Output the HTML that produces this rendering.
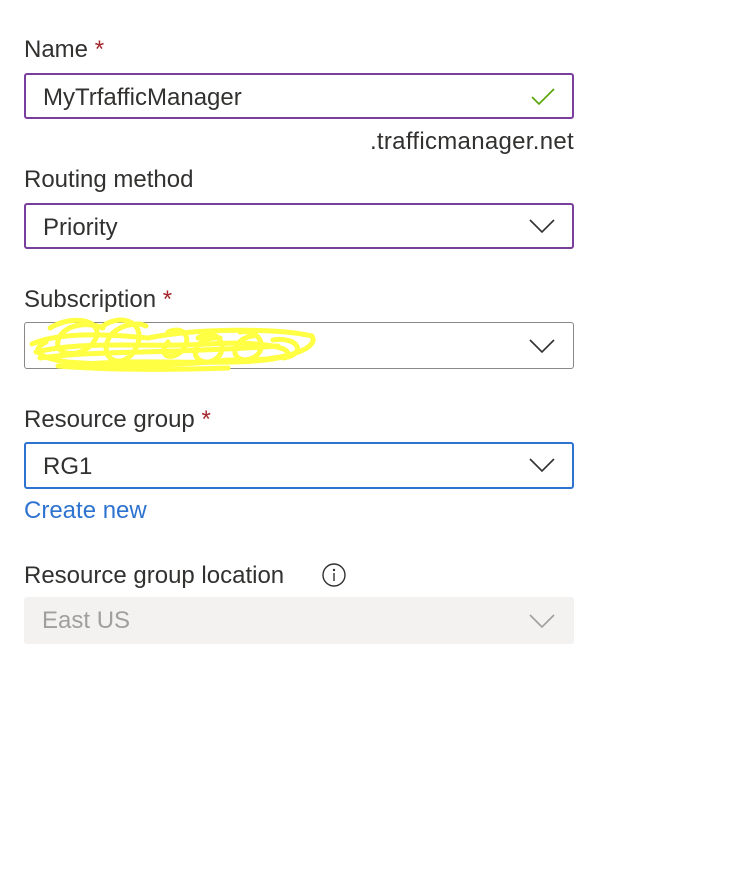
<!DOCTYPE html>
<html><head><style>
body{margin:0;width:742px;height:876px;background:#fff;font-family:"Liberation Sans",sans-serif;position:relative;overflow:hidden}
.t{position:absolute;font-size:24px;color:#323130;white-space:nowrap;line-height:28px}
.s{color:#a4262c}
.b{position:absolute;left:24px;width:546px;height:43px;border:2px solid #7a3e9d;border-radius:3px;box-sizing:content-box}
.v{position:absolute;left:17px;top:9px;font-size:24px;color:#323130;line-height:28px}
.c{position:absolute;right:16px;top:12px}
</style></head><body>
<div class="t" style="left:24px;top:36px">Name <span class="s">*</span></div>
<div class="b" style="top:73px;height:42px"><div class="v">MyTrfafficManager</div>
<svg class="c" width="26" height="20" viewBox="0 0 26 20"><path d="M2 10 L9 17 L24 2" fill="none" stroke="#57a300" stroke-width="1.6"/></svg></div>
<div class="t" style="right:168px;top:128px;letter-spacing:0.3px">.trafficmanager.net</div>
<div class="t" style="left:24px;top:166px">Routing method</div>
<div class="b" style="top:203px;height:42px"><div class="v">Priority</div>
<svg class="c" width="28" height="18" viewBox="0 0 28 18"><path d="M2 3 L14 15 L26 3" fill="none" stroke="#323130" stroke-width="1.6"/></svg></div>
<div class="t" style="left:24px;top:286px">Subscription <span class="s">*</span></div>
<div class="b" style="top:322px;height:45px;border:1px solid #8a8886;width:548px">
<svg class="c" width="28" height="18" viewBox="0 0 28 18" style="top:14px;right:17px"><path d="M2 3 L14 15 L26 3" fill="none" stroke="#323130" stroke-width="1.6"/></svg></div>
<svg style="position:absolute;left:28px;top:314px" width="292" height="62" viewBox="0 0 292 62"><g fill="none" stroke="#ffff44" stroke-width="5" stroke-linecap="round">
<path d="M4 30 C30 18 80 20 120 24 C170 14 250 14 284 22 C292 35 255 48 200 46 C150 52 90 52 40 48 C10 44 2 36 18 28"/>
<path d="M8 38 C60 26 120 34 180 30 C230 27 268 33 258 42 C220 54 120 44 60 50"/>
<path d="M22 14 C45 0 75 6 68 24 C58 46 20 44 32 22 C40 10 60 8 75 14"/>
<path d="M75 12 C95 -2 120 10 108 34 C96 58 68 46 82 22 C92 10 110 8 118 12"/>
<path d="M140 18 C160 10 165 30 150 40 C140 46 130 40 140 28"/>
<path d="M170 24 C192 10 205 40 182 48 C160 50 162 22 192 24"/>
<path d="M212 18 C236 14 242 42 218 46 C200 46 205 24 225 22"/>
<path d="M245 26 C270 22 280 40 255 44"/>
<path d="M12 44 C70 36 140 40 250 32"/>
<path d="M30 52 C80 56 140 56 200 54"/>
</g></svg>
<div class="t" style="left:24px;top:406px">Resource group <span class="s">*</span></div>
<div class="b" style="top:442px;height:43px;border-color:#2f73d0"><div class="v">RG1</div>
<svg class="c" width="28" height="18" viewBox="0 0 28 18"><path d="M2 3 L14 15 L26 3" fill="none" stroke="#323130" stroke-width="1.6"/></svg></div>
<div class="t" style="left:24px;top:497px;color:#2f73d0">Create new</div>
<div class="t" style="left:24px;top:562px">Resource group location</div>
<svg style="position:absolute;left:321px;top:562px" width="26" height="26" viewBox="0 0 26 26"><circle cx="13" cy="13" r="11" fill="none" stroke="#323130" stroke-width="1.4"/><circle cx="13" cy="8" r="1.2" fill="#323130"/><path d="M13 11 V19" stroke="#323130" stroke-width="1.4"/></svg>
<div style="position:absolute;left:24px;top:597px;width:550px;height:47px;background:#f3f2f1;border-radius:3px">
<div class="v" style="left:18px;top:10px;color:#a19f9d">East US</div>
<svg style="position:absolute;right:18px;top:15px" width="28" height="18" viewBox="0 0 28 18"><path d="M2 3 L14 15 L26 3" fill="none" stroke="#a19f9d" stroke-width="1.6"/></svg></div>
</body></html>
